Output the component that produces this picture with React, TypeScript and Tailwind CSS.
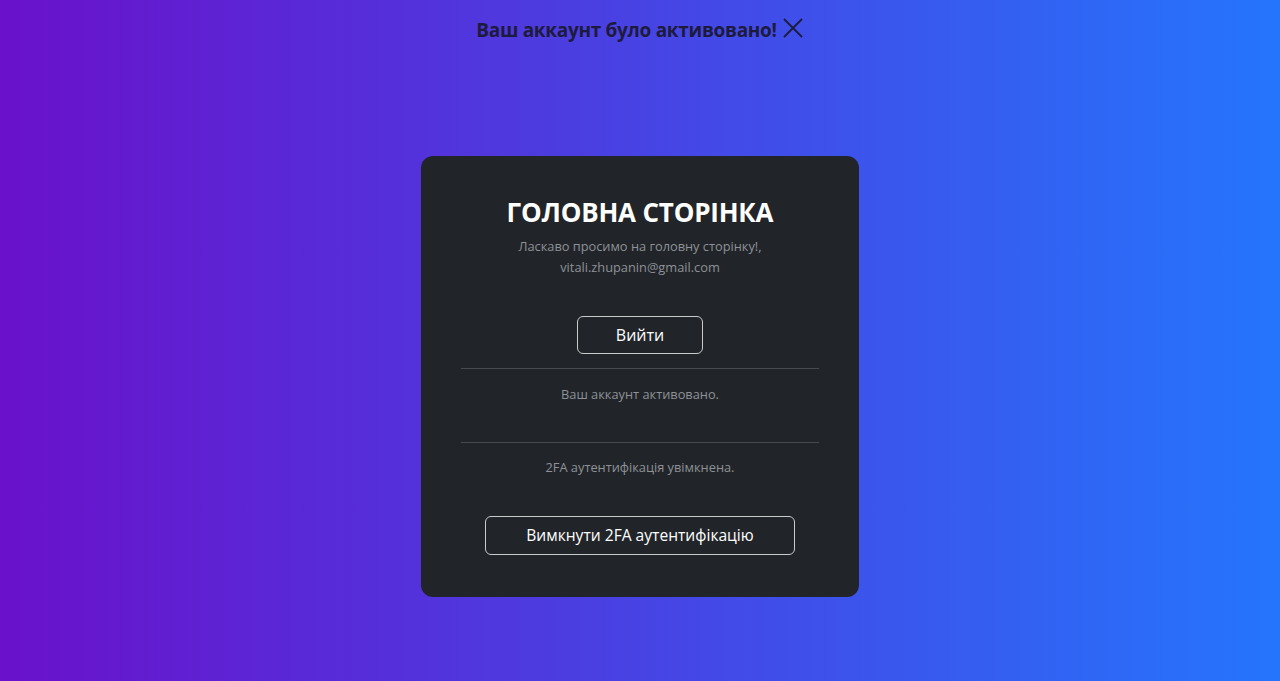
import { useState } from "react"

const font = { fontFamily: '"Open Sans", "Noto Sans", sans-serif' }

function CloseIcon() {
  return (
    <svg width="22" height="22" viewBox="0 0 22 22" fill="none" stroke="currentColor" strokeWidth="1.8">
      <path d="M2 2 L20 20 M20 2 L2 20" />
    </svg>
  )
}

export default function App() {
  const [showAlert, setShowAlert] = useState(true)

  return (
    <div
      style={font}
      className="flex min-h-[681px] w-full flex-col items-center bg-[linear-gradient(to_right,#6a11cb,#2575fc)]"
    >
      {showAlert && (
        <div className="mt-[15px] flex h-[30px] items-center gap-[5px] text-[#1d1b3c]">
          <span className="text-[19px] font-bold tracking-[-0.3px]">Ваш аккаунт було активовано!</span>
          <button onClick={() => setShowAlert(false)} className="-mt-[4px]">
            <CloseIcon />
          </button>
        </div>
      )}

      <div className="mt-[111px] w-[438px] rounded-[12px] bg-[#212529] px-10 pt-[41px] pb-[42px] text-center">
        <h1 className="text-[26px] font-bold leading-[31px] tracking-[-0.2px] text-white">
          ГОЛОВНА СТОРІНКА
        </h1>
        <p className="mt-[8px] text-[12.8px] leading-[21px] text-[#8e9196]">
          Ласкаво просимо на головну сторінку!,
          <br />
          vitali.zhupanin@gmail.com
        </p>

        <button className="mx-auto mt-[38px] block h-[38px] w-[126px] rounded-[6px] border border-[#c9cbcd] text-[16px] text-white">
          Вийти
        </button>

        <hr className="mt-[14px] border-[#474b50]" />
        <p className="mt-[15px] text-[12.8px] leading-[21px] text-[#8e9196]">Ваш аккаунт активовано.</p>

        <hr className="mt-[37px] border-[#474b50]" />
        <p className="mt-[14px] text-[12.8px] leading-[21px] text-[#8e9196]">2FA аутентифікація увімкнена.</p>

        <button className="mx-auto mt-[38px] block h-[39px] w-[310px] rounded-[6px] border border-[#c9cbcd] text-[15.6px] text-white">
          Вимкнути 2FA аутентифікацію
        </button>
      </div>
    </div>
  )
}
